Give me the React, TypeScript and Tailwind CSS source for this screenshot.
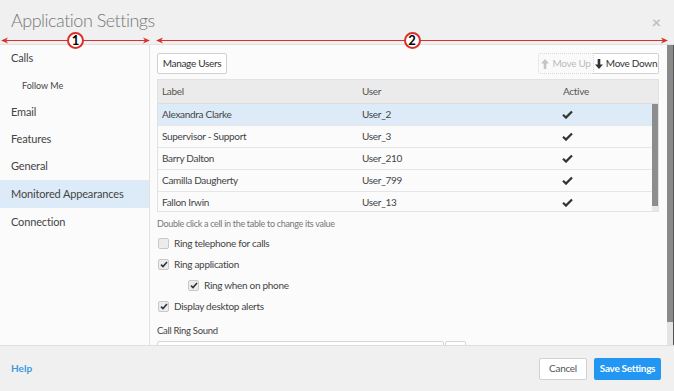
import React from "react";

const FONT = { fontFamily: "Lato, 'Open Sans', sans-serif" };

const navItems = [
  { label: "Calls", sub: false },
  { label: "Follow Me", sub: true },
  { label: "Email", sub: false },
  { label: "Features", sub: false },
  { label: "General", sub: false },
  { label: "Monitored Appearances", sub: false, active: true },
  { label: "Connection", sub: false },
];

const rows = [
  { label: "Alexandra Clarke", user: "User_2", selected: true },
  { label: "Supervisor - Support", user: "User_3" },
  { label: "Barry Dalton", user: "User_210" },
  { label: "Camilla Daugherty", user: "User_799" },
  { label: "Fallon Irwin", user: "User_13" },
];

const Check = () => (
  <svg width="11" height="9" viewBox="0 0 11 9">
    <path d="M1 4.8 L4 7.6 L10 1.4" stroke="#333" strokeWidth="2.2" fill="none" />
  </svg>
);

const Checkbox = ({ checked, label }: { checked: boolean; label: string }) => (
  <div className="flex items-center gap-[5px] h-[21px] shrink-0">
    <span className="w-[11px] h-[11px] rounded-[2px] border border-[#c8c8c8] bg-[#ececec] flex items-center justify-center">
      {checked && (
        <svg width="8" height="7" viewBox="0 0 8 7">
          <path d="M1 3.6 L3 5.6 L7 1" stroke="#333" strokeWidth="1.6" fill="none" />
        </svg>
      )}
    </span>
    <span className="text-[10px] tracking-[-0.3px] text-[#444]">{label}</span>
  </div>
);

const Marker = ({ n }: { n: string }) => (
  <span className="w-[17px] h-[17px] rounded-full border-2 border-[#d9302c] bg-white flex items-center justify-center text-[13px] font-bold text-black leading-none">
    {n}
  </span>
);

const Annotation = ({ left, width, n }: { left: number; width: number; n: string }) => (
  <div className="absolute top-[32px] h-[17px] flex items-center" style={{ left, width }}>
    <svg className="absolute inset-0" width={width} height="17">
      <line x1="2" y1="8.5" x2={width - 2} y2="8.5" stroke="#d9302c" strokeWidth="1" />
      <path d={`M0 8.5 L7 5.5 L5 8.5 L7 11.5 Z`} fill="#d9302c" />
      <path d={`M${width} 8.5 L${width - 7} 5.5 L${width - 5} 8.5 L${width - 7} 11.5 Z`} fill="#d9302c" />
    </svg>
    <div className="relative flex-1 flex justify-center">
      <Marker n={n} />
    </div>
  </div>
);

export default function App() {
  return (
    <div className="relative w-[674px] h-[391px] flex flex-col bg-[#fbfbfb] overflow-hidden" style={FONT}>
      {/* header */}
      <div className="h-[45px] shrink-0 bg-[#f0f0f0] border-b border-[#e2e2e2] flex items-center justify-between pl-[11px] pr-[13px] pb-[4px]">
        <span className="text-[18px] tracking-[-0.5px] text-[#777] font-light">Application Settings</span>
        <span className="text-[16px] text-[#c0c0c0] font-bold leading-none mt-[3px]">×</span>
      </div>

      {/* body */}
      <div className="flex-1 flex min-h-0">
        <div className="w-[150px] shrink-0 border-r border-[#e2e2e2] flex flex-col">
          {navItems.map((it) => (
            <div
              key={it.label}
              className={`flex items-center shrink-0 ${it.label === "Monitored Appearances" || it.label === "Connection" ? "h-[28px]" : "h-[27px]"} ${
                it.sub ? "pl-[22px] text-[9px]" : "pl-[11px] text-[11px] tracking-[-0.15px]"
              } ${it.active ? "bg-[#dcebf7]" : ""} text-[#444]`}
            >
              {it.label}
            </div>
          ))}
        </div>

        <div className="flex-1 flex flex-col pl-[7px] pr-[8px] pt-[8px] min-w-0 overflow-hidden">
          <div className="flex justify-between shrink-0">
            <button className="h-[21px] w-[70px] border border-[#d0d0d0] rounded-[2px] bg-white text-[10px] tracking-[-0.3px] text-[#333]">
              Manage Users
            </button>
            <div className="flex">
              <button className="h-[21px] w-[56px] border border-dotted border-[#d8d8d8] rounded-l-[2px] bg-[#fafafa] text-[10px] tracking-[-0.3px] text-[#bbb] flex items-center justify-center gap-[3px]">
                <svg width="8" height="10" viewBox="0 0 8 10">
                  <path d="M4 0 L8 4.5 L5.3 4.5 L5.3 10 L2.7 10 L2.7 4.5 L0 4.5 Z" fill="#c4c4c4" />
                </svg>
                Move Up
              </button>
              <button className="h-[21px] w-[65px] border border-[#d0d0d0] border-l-0 rounded-r-[2px] bg-white text-[10px] tracking-[-0.3px] text-[#333] flex items-center justify-center gap-[3px]">
                <svg width="8" height="10" viewBox="0 0 8 10">
                  <path d="M4 10 L8 5.5 L5.3 5.5 L5.3 0 L2.7 0 L2.7 5.5 L0 5.5 Z" fill="#333" />
                </svg>
                Move Down
              </button>
            </div>
          </div>

          <div className="mt-[5px] h-[133px] shrink-0 border border-[#e2e2e2] bg-[#fbfbfb] flex flex-col overflow-hidden">
            <div className="h-[24px] bg-[#ebebeb] flex items-center text-[10px] tracking-[-0.3px] text-[#555] border-b border-[#dedede] shrink-0">
              <span className="w-[204px] pl-[4px]">Label</span>
              <span className="w-[201px]">User</span>
              <span>Active</span>
            </div>
            <div className="flex flex-1 min-h-0">
              <div className="flex-1 flex flex-col">
                {rows.map((r) => (
                  <div
                    key={r.label}
                    className={`h-[22px] shrink-0 flex items-center text-[10px] tracking-[-0.3px] text-[#444] border-b border-[#e6e6e6] ${
                      r.selected ? "bg-[#dcebf7]" : ""
                    }`}
                  >
                    <span className="w-[204px] pl-[4px]">{r.label}</span>
                    <span className="w-[200px]">{r.user}</span>
                    <Check />
                  </div>
                ))}
              </div>
              <div className="w-[6px] flex flex-col">
                <div className="h-[102px] bg-[#8d8d8d]" />
                <div className="flex-1 bg-[#e8e8e8]" />
              </div>
            </div>
          </div>

          <div className="mt-[4px] h-[15px] shrink-0 text-[9px] tracking-[-0.3px] text-[#777] flex items-center">
            Double click a cell in the table to change its value
          </div>

          <div className="mt-[2px] flex flex-col pl-[1px] shrink-0">
            <Checkbox checked={false} label="Ring telephone for calls" />
            <Checkbox checked label="Ring application" />
            <div className="pl-[30px]">
              <Checkbox checked label="Ring when on phone" />
            </div>
            <Checkbox checked label="Display desktop alerts" />
          </div>

          <div className="mt-[6px] shrink-0 text-[9.5px] tracking-[-0.3px] text-[#444] h-[16px] flex items-center">Call Ring Sound</div>
          <div className="mt-[2px] flex gap-[1px] shrink-0">
            <div className="w-[287px] h-[22px] border border-[#d6d6d6] rounded-[2px] bg-white" />
            <div className="w-[21px] h-[22px] border border-[#d6d6d6] rounded-[2px] bg-white" />
          </div>
        </div>

        <div className="w-[7px] shrink-0 flex">
          <div className="w-[6px] flex flex-col">
            <div className="h-[277px] bg-[#8a8a8a]" />
            <div className="flex-1 bg-[#e4e4e4]" />
          </div>
          <div className="w-[1px] bg-[#555]" />
        </div>
      </div>

      {/* footer */}
      <div className="h-[46px] shrink-0 bg-[#f0f0f0] border-t border-[#dedede] flex items-center justify-between pl-[11px] pr-[13px]">
        <span className="text-[10px] font-bold text-[#3a9ae0]">Help</span>
        <div className="flex gap-[7px]">
          <button className="h-[22px] w-[48px] border border-[#d0d0d0] rounded-[2px] bg-white text-[10px] tracking-[-0.3px] text-[#555]">
            Cancel
          </button>
          <button className="h-[22px] w-[67px] rounded-[2px] bg-[#2196f3] text-[10px] tracking-[-0.3px] font-bold text-white">
            Save Settings
          </button>
        </div>
      </div>

      <Annotation left={1} width={149} n="1" />
      <Annotation left={156} width={512} n="2" />
    </div>
  );
}
